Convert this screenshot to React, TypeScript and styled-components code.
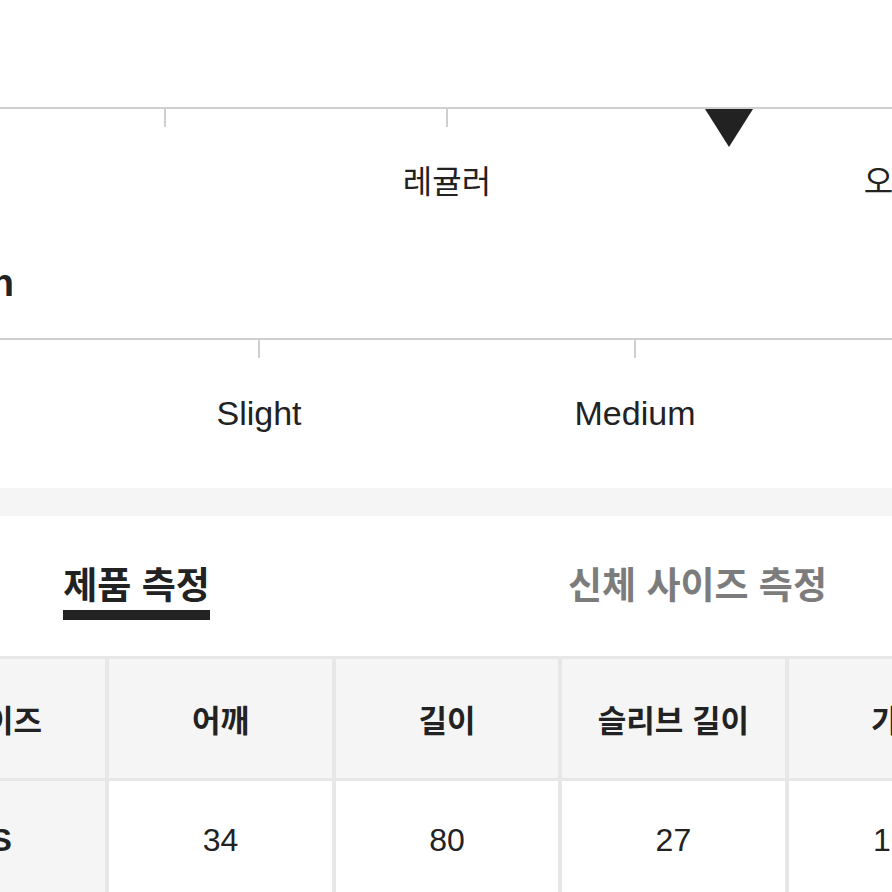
import styled, { createGlobalStyle } from "styled-components";

const GlobalStyle = createGlobalStyle`
  html, body {
    margin: 0;
    padding: 0;
    background: #ffffff;
    overflow: hidden;
  }
  body {
    font-family: "Liberation Sans", "Noto Sans CJK KR", sans-serif;
    color: #222222;
  }
`;

type Label = { text: string; col: string; align: "start" | "center" | "end" };

// fit scale: 4 equal segments, labels at start / middle / end
const fitLabels: Label[] = [
  { text: "슬림", col: "1 / 2", align: "start" },
  { text: "레귤러", col: "2 / 4", align: "center" },
  { text: "오버사이즈", col: "4 / 5", align: "end" },
];

// stretch scale: 3 segments, grid of sixths so labels center on ticks
const stretchLabels: Label[] = [
  { text: "None", col: "1 / 2", align: "start" },
  { text: "Slight", col: "2 / 4", align: "center" },
  { text: "Medium", col: "4 / 6", align: "center" },
  { text: "High", col: "6 / 7", align: "end" },
];

const headers = ["사이즈", "어깨", "길이", "슬리브 길이", "가슴"];
const rows = [["S", "34", "80", "27", "100"]];

export default function App() {
  return (
    <>
      <GlobalStyle />
      <Viewport>
        <Page>
          <Scale $height={154}>
            {[25, 50, 75].map((t) => (
              <Tick key={t} style={{ left: `${t}%` }} />
            ))}
            <Marker style={{ left: "75%" }} />
            <Labels $cols={4}>
              {fitLabels.map((l) => (
                <ScaleLabel key={l.text} $align={l.align} style={{ gridColumn: l.col }}>
                  {l.text}
                </ScaleLabel>
              ))}
            </Labels>
          </Scale>

          <Title>Stretch</Title>

          <Scale $height={150} $gap={33}>
            {[33.333, 66.666].map((t) => (
              <Tick key={t} style={{ left: `${t}%` }} />
            ))}
            <Labels $cols={6}>
              {stretchLabels.map((l) => (
                <ScaleLabel key={l.text} $align={l.align} $latin style={{ gridColumn: l.col }}>
                  {l.text}
                </ScaleLabel>
              ))}
            </Labels>
          </Scale>

          <Divider />

          <Tabs>
            <Tab $active>제품 측정</Tab>
            <Tab>신체 사이즈 측정</Tab>
          </Tabs>

          <Table>
            {headers.map((h, i) => (
              <HeadCell key={h} $first={i === 0}>
                {h}
              </HeadCell>
            ))}
            {rows.map((r) =>
              r.map((v, i) => (
                <BodyCell key={i} $first={i === 0}>
                  {v}
                </BodyCell>
              ))
            )}
          </Table>
        </Page>
      </Viewport>
    </>
  );
}

const Viewport = styled.div`
  width: 892px;
  height: 892px;
  overflow: hidden;
`;

const Page = styled.div`
  width: 1128px;
  margin-left: -117px;
  padding-top: 107px;
`;

const Scale = styled.div<{ $height: number; $gap?: number }>`
  position: relative;
  height: ${(p) => p.$height}px;
  margin-top: ${(p) => p.$gap ?? 0}px;
  border-top: 2px solid #cfcfcf;
  box-sizing: border-box;
  padding-top: 55px;
`;

const Tick = styled.div`
  position: absolute;
  top: 0;
  width: 2px;
  height: 18px;
  margin-left: -1px;
  background: #cfcfcf;
`;

const Marker = styled.div`
  position: absolute;
  top: 0;
  width: 0;
  height: 0;
  transform: translateX(-50%);
  border-left: 24px solid transparent;
  border-right: 24px solid transparent;
  border-top: 38px solid #222222;
`;

const Labels = styled.div<{ $cols: number }>`
  display: grid;
  grid-template-columns: repeat(${(p) => p.$cols}, 1fr);
`;

const ScaleLabel = styled.div<{ $align: "start" | "center" | "end"; $latin?: boolean }>`
  justify-self: ${(p) => p.$align};
  white-space: nowrap;
  line-height: 36px;
  font-size: ${(p) => (p.$latin ? 34 : 32)}px;
  color: #222222;
`;

const Title = styled.h2`
  margin: 0;
  font-size: 38px;
  line-height: 44px;
  font-weight: 700;
  color: #222222;
`;

const Divider = styled.div`
  height: 28px;
  background: #f5f5f5;
`;

const Tabs = styled.div`
  display: grid;
  grid-template-columns: 561px 561px;
  justify-items: center;
  margin-left: -27px;
  padding-top: 48px;
  margin-bottom: 36px;
`;

const Tab = styled.div<{ $active?: boolean }>`
  font-size: 37px;
  line-height: 46px;
  font-weight: 700;
  color: ${(p) => (p.$active ? "#222222" : "#7c7c7c")};
  border-bottom: 10px solid ${(p) => (p.$active ? "#222222" : "transparent")};
`;

const Table = styled.div`
  display: grid;
  grid-template-columns: repeat(5, 1fr);
  grid-auto-rows: 119px;
  column-gap: 4px;
  row-gap: 3px;
  padding-top: 3px;
  background: #e7e7e7;
`;

const HeadCell = styled.div<{ $first?: boolean }>`
  display: flex;
  align-items: center;
  justify-content: center;
  padding-left: ${(p) => (p.$first ? 10 : 0)}px;
  background: #f5f5f5;
  font-size: 31px;
  font-weight: 700;
  color: #222222;
`;

const BodyCell = styled.div<{ $first?: boolean }>`
  display: flex;
  align-items: center;
  justify-content: center;
  padding-left: ${(p) => (p.$first ? 14 : 0)}px;
  background: ${(p) => (p.$first ? "#f5f5f5" : "#ffffff")};
  font-size: 32px;
  font-weight: ${(p) => (p.$first ? 700 : 400)};
  color: #222222;
`;
